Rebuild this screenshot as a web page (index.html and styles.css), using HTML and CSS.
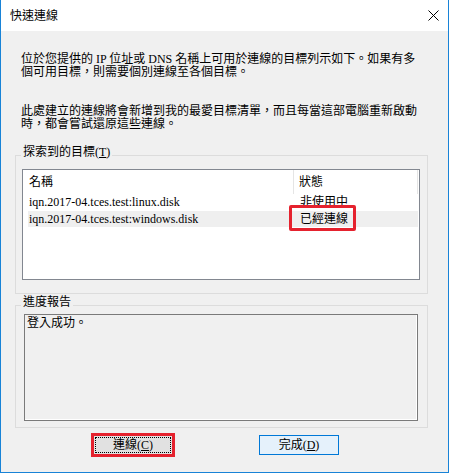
FILE: index.html
```html
<!DOCTYPE html>
<html lang="zh-Hant">
<head>
<meta charset="utf-8">
<title>快速連線</title>
<link rel="stylesheet" href="styles.css">
</head>
<body>
<div class="window">
  <div class="titlebar">
    <span class="title">快速連線</span>
    <svg class="close" width="11" height="11" viewBox="0 0 11 11"><path d="M0.5 0.5 L10.5 10.5 M10.5 0.5 L0.5 10.5" stroke="#000" stroke-width="1" fill="none"/></svg>
  </div>
  <div class="content">
    <p class="para p1">位於您提供的 IP 位址或 DNS 名稱上可用於連線的目標列示如下。如果有多<br>個可用目標，則需要個別連線至各個目標。</p>
    <p class="para p2">此處建立的連線將會新增到我的最愛目標清單，而且每當這部電腦重新啟動<br>時，都會嘗試還原這些連線。</p>

    <div class="group g1">
      <div class="glabel">探索到的目標(<u>T</u>)</div>
      <div class="listbox">
        <div class="lv-header">
          <div class="h-name">名稱</div>
          <div class="h-status">狀態</div>
        </div>
        <div class="row">
          <div class="c-name">iqn.2017-04.tces.test:linux.disk</div>
          <div class="c-status">非使用中</div>
        </div>
        <div class="row selected">
          <div class="c-name">iqn.2017-04.tces.test:windows.disk</div>
          <div class="c-status">已經連線</div>
        </div>
        <div class="highlight"></div>
      </div>
    </div>

    <div class="group g2">
      <div class="glabel">進度報告</div>
      <div class="report">登入成功。</div>
    </div>

    <div class="buttons">
      <button class="btn btn-connect"><span class="focus">連線(<u>C</u>)</span></button>
      <button class="btn btn-done">完成(<u>D</u>)</button>
    </div>
  </div>
</div>
</body>
</html>
```
FILE: styles.css
```css
html, body {
  margin: 0;
  padding: 0;
  background: #ffffff;
}

.window {
  width: 449px;
  height: 473px;
  box-sizing: border-box;
  border: 1px solid #1883d7;
  border-top: none;
  display: flex;
  flex-direction: column;
  font-family: "Liberation Serif", "Noto Sans CJK TC", serif;
  font-size: 12px;
  line-height: 13px;
  color: #000;
}

.titlebar {
  height: 31px;
  flex: none;
  background: #ffffff;
  display: flex;
  align-items: center;
  justify-content: space-between;
  padding: 0 9px 0 9px;
}

.title {
  font-family: "Noto Sans CJK TC", sans-serif;
  font-size: 12px;
  line-height: 14px;
  margin-top: -1px;
}

.close {
  display: block;
  margin-top: -1px;
}

.content {
  flex: 1;
  background: #f0f0f0;
  display: flex;
  flex-direction: column;
}

.para {
  margin: 0;
  padding-left: 20px;
  white-space: nowrap;
}

.p1 {
  margin-top: 22px;
}

.p2 {
  margin-top: 26px;
}

.group {
  margin-left: 14px;
  width: 413px;
  box-sizing: border-box;
  border: 1px solid #dcdcdc;
}

.g1 {
  margin-top: 24px;
  padding-bottom: 13px;
}

.g2 {
  margin-top: 11px;
  padding-bottom: 6px;
}

.glabel {
  display: block;
  width: max-content;
  height: 13px;
  margin-top: -10px;
  margin-left: 5px;
  padding: 0 2px;
  background: #f0f0f0;
}

.listbox {
  position: relative;
  margin: 10px 0 0 6px;
  width: 398px;
  height: 111px;
  box-sizing: border-box;
  border: 1px solid #828790;
  background: #ffffff;
}

.lv-header {
  display: flex;
  height: 24px;
  align-items: stretch;
}

.h-name {
  width: 271px;
  box-sizing: border-box;
  padding-left: 6px;
  border-right: 1px solid #e5e5e5;
  display: flex;
  align-items: center;
}

.h-status {
  width: 124px;
  box-sizing: border-box;
  padding-left: 5px;
  border-right: 1px solid #e5e5e5;
  display: flex;
  align-items: center;
}

.row {
  margin-left: 5px;
  width: 390px;
  height: 17px;
  display: grid;
  grid-template-columns: 272px 1fr;
  align-items: center;
}

.row.selected {
  height: 16px;
  background: #efefef;
}

.c-name {
  padding-left: 1px;
  white-space: nowrap;
}

.c-status {
  white-space: nowrap;
}

.highlight {
  position: absolute;
  left: 266px;
  top: 35px;
  width: 67px;
  height: 26px;
  box-sizing: border-box;
  border: 3px solid #e5222e;
  border-radius: 2px;
}

.report {
  margin: 5px 0 0 8px;
  width: 394px;
  height: 107px;
  box-sizing: border-box;
  border: 1px solid #7a7a7a;
  box-shadow: inset -1px -1px 0 #ffffff;
  background: #f0f0f0;
  padding: 2px 0 0 2px;
}

.buttons {
  display: flex;
  gap: 86px;
  margin-top: 7px;
  padding-left: 92px;
}

.btn {
  width: 80px;
  height: 20px;
  box-sizing: border-box;
  margin: 0;
  padding: 0;
  font-family: "Liberation Serif", "Noto Sans CJK TC", serif;
  font-size: 12px;
  line-height: 13px;
  color: #000;
  display: flex;
  align-items: center;
  justify-content: center;
}

.btn-connect {
  background: #e1e1e1;
  border: 1px solid #adadad;
  outline: 3px solid #e5222e;
  outline-offset: -1px;
  padding: 1px;
}

.btn-connect .focus {
  flex: 1;
  align-self: stretch;
  border: 1px dotted #000;
  display: flex;
  align-items: center;
  justify-content: center;
}

.btn-done {
  background: #e5f1fb;
  border: 1px solid #0078d7;
}
```
